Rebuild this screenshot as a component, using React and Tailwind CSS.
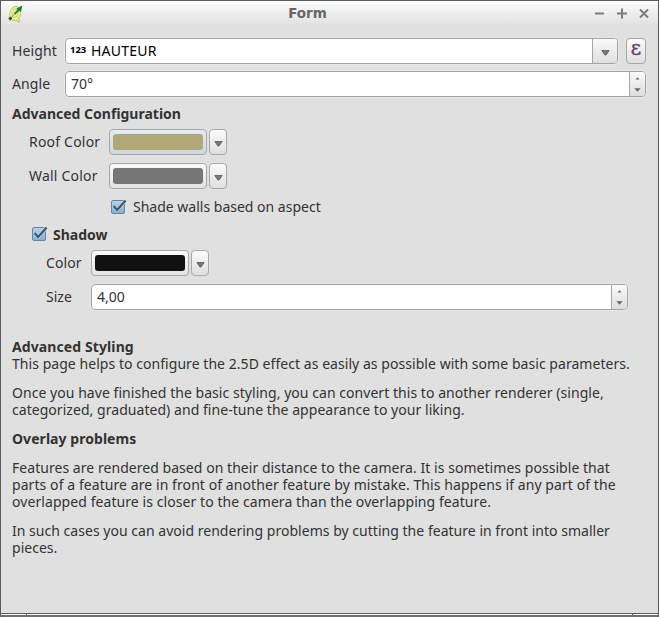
import React from 'react';

function Arrow() {
  return (
    <svg width="9" height="6" viewBox="0 0 9 6" className="mt-[3px]">
      <path d="M0.8 0.5h7.4L5.1 5H3.9z" fill="#777" stroke="#5c5c5c" strokeWidth="0.8" />
    </svg>
  );
}

function Spinner() {
  return (
    <div className="flex h-full w-4 flex-col items-center justify-between rounded-r-[3px] border-l border-[#a6a6a6] bg-linear-to-b from-[#fafafa] to-[#dedede] pt-[5px] pb-1">
      <svg width="5" height="3" viewBox="0 0 5 3"><path d="M0.5 2.5L2.5 0.3 4.5 2.5z" fill="#666" /></svg>
      <svg width="7" height="4" viewBox="0 0 7 4"><path d="M0.3 0.3h6.4L3.5 3.7z" fill="#666" /></svg>
    </div>
  );
}

function SpinBox({ value, className }) {
  return (
    <div className={`flex h-[26px] items-center rounded-[4px] border border-[#a4a4a4] bg-white shadow-[0_0_0_1px_#e8e8e8] ${className}`}>
      <span className="flex-1 pb-[2px] pl-[5px]">{value}</span>
      <Spinner />
    </div>
  );
}

function ColorButton({ color, frame = 'from-[#fafafa] to-[#e2e2e2]' }) {
  return (
    <div className="flex gap-[2px]">
      <div className={`h-[26px] w-[98px] rounded-[4px] border border-[#a8a8a8] bg-linear-to-b px-[3px] py-1 ${frame}`}>
        <div className={`h-4 rounded-[3px] ${color}`} />
      </div>
      <div className="flex h-[26px] w-[18px] items-center justify-center rounded-[4px] border border-[#a8a8a8] bg-linear-to-b from-[#fbfbfb] to-[#dfdfdf]">
        <Arrow />
      </div>
    </div>
  );
}

function Check() {
  return (
    <svg width="17" height="16" viewBox="0 0 17 16">
      <defs>
        <linearGradient id="box" x1="0" y1="0" x2="0" y2="1">
          <stop offset="0" stopColor="#b7d3ec" />
          <stop offset="1" stopColor="#86add0" />
        </linearGradient>
      </defs>
      <rect x="1.5" y="1.5" width="13" height="13" rx="1.5" fill="url(#box)" stroke="#6285a3" />
      <path d="M3.7 6.9L7.1 10.9 15.6 1.5" fill="none" stroke="#c6ddf0" strokeWidth="3.4" />
      <path d="M3.7 6.9L7.1 10.9 15.6 1.5" fill="none" stroke="#465767" strokeWidth="2.3" />
    </svg>
  );
}

function Logo() {
  return (
    <svg width="16" height="18" viewBox="0 0 16 18">
      <ellipse cx="7.2" cy="8.5" rx="4" ry="5.8" transform="rotate(18 7.2 8.5)" fill="#f8fac8" stroke="#b4b96a" strokeWidth="3.6" />
      <path d="M7 12.5c2-.5 2 4 5 3" fill="none" stroke="#a9ae60" strokeWidth="3" />
      <ellipse cx="7.2" cy="8.5" rx="4" ry="5.8" transform="rotate(18 7.2 8.5)" fill="none" stroke="#e9ef78" strokeWidth="2.4" />
      <path d="M7 12.5c2-.5 2 4 5 3" fill="none" stroke="#edf28a" strokeWidth="1.8" />
      <path d="M6.5 9L11.5 4" fill="none" stroke="#277a36" strokeWidth="2" />
      <path d="M2.5 13.5L6.5 9" fill="none" stroke="#7b8a42" strokeWidth="0.8" />
      <path d="M8.5 3.5L14.3 0.5 13 7z" fill="#1c7d35" />
      <path d="M0.6 13.5h3.4M2.3 11.8v3.4" stroke="#2d4a26" strokeWidth="1.5" />
    </svg>
  );
}

export default function App() {
  return (
    <div className="flex h-[617px] w-[659px] flex-col border-x border-t border-[#5c5a5c] bg-[#e0e0e0] font-['Noto_Sans',sans-serif] text-[14px] leading-[17px] whitespace-nowrap text-[#333]">
      <header className="flex h-[25px] items-center bg-linear-to-b from-[#fcfcfc] to-[#e0e0e0] pr-[7px] pl-[7px]">
        <Logo />
        <h1 className="flex-1 pr-[2px] text-center font-['DejaVu_Sans',sans-serif] text-[13.5px] font-bold text-[#666]">Form</h1>
        <svg width="58" height="12" viewBox="0 0 58 12" fill="none" stroke="#7b7b7b" strokeWidth="2">
          <path d="M2 5.5h9M24 5.5h10M29 0.5v10M47 1.5l8 8M55 1.5l-8 8" />
        </svg>
      </header>
      <main className="flex flex-1 flex-col pl-[11px]">
        <div className="mt-3 flex h-[26px] items-center">
          <label className="w-[53px] pb-[2px] tracking-[0.1px]">Height</label>
          <div className="flex h-[26px] w-[553px] items-center rounded-[4px] border border-[#a4a4a4] bg-white shadow-[0_0_0_1px_#e8e8e8]">
            <span className="w-[25px] pb-[3px] pl-1 text-[9.5px] font-bold text-black">123</span>
            <span className="flex-1 pb-[2px] tracking-[0.25px] text-black">HAUTEUR</span>
            <div className="flex h-full w-[25px] items-center justify-center rounded-r-[3px] border-l border-[#a6a6a6] bg-linear-to-b from-[#fafafa] to-[#dedede]">
              <Arrow />
            </div>
          </div>
          <div className="ml-2 flex h-[26px] w-5 items-center justify-center rounded-[4px] border border-[#a8a8a8] bg-linear-to-b from-[#fbfbfb] to-[#dfdfdf] pb-[6px] font-['DejaVu_Serif',serif] text-[20px] [-webkit-text-stroke:0.4px_#63406b] text-[#63406b]">ε</div>
        </div>
        <div className="mt-[7px] flex h-[26px] items-center">
          <label className="w-[53px] pb-[2px] tracking-[0.1px]">Angle</label>
          <SpinBox value="70°" className="w-[581px]" />
        </div>
        <h2 className="mt-2 h-[17px] font-bold">Advanced Configuration</h2>
        <div className="mt-[7px] flex h-[26px] items-center pl-[17px]">
          <label className="w-20 pb-[2px] tracking-[0.2px]">Roof Color</label>
          <ColorButton color="bg-[#b0a877]" frame="from-[#e5ebf1] to-[#ced7df]" />
        </div>
        <div className="mt-2 flex h-[26px] items-center pl-[17px]">
          <label className="w-20 pb-[2px] tracking-[0.2px]">Wall Color</label>
          <ColorButton color="bg-[#777]" />
        </div>
        <div className="mt-[9px] flex h-[17px] items-center gap-[6px] pl-[98px]">
          <Check />
          <span>Shade walls based on aspect</span>
        </div>
        <div className="mt-[11px] flex h-[17px] items-center gap-[5px] pl-[19px]">
          <div className="pb-[2px]"><Check /></div>
          <b>Shadow</b>
        </div>
        <div className="mt-[7px] flex h-[26px] items-center pl-[34px]">
          <label className="w-[45px] pb-[2px] tracking-[0.1px]">Color</label>
          <ColorButton color="bg-[#111]" />
        </div>
        <div className="mt-2 flex h-[26px] items-center pl-[34px]">
          <label className="w-[45px] pb-[2px]">Size</label>
          <SpinBox value="4,00" className="w-[537px]" />
        </div>
        <article className="mt-[28px]">
          <h2 className="font-bold tracking-[0.1px]">Advanced Styling</h2>
          <p className="tracking-[0.05px]">This page helps to configure the 2.5D effect as easily as possible with some basic parameters.</p>
          <p className="mt-3 tracking-[0.045px]">Once you have finished the basic styling, you can convert this to another renderer (single,<br />categorized, graduated) and fine-tune the appearance to your liking.</p>
          <h2 className="mt-3 font-bold tracking-[0.05px]">Overlay problems</h2>
          <p className="mt-3 tracking-[0.075px]"><span className="tracking-[0.045px]">Features are rendered based on their distance to the camera. It is sometimes possible that</span><br />parts of a feature are in front of another feature by mistake. This happens if any part of the<br />overlapped feature is closer to the camera than the overlapping feature.</p>
          <p className="mt-3 tracking-[0.025px]">In such cases you can avoid rendering problems by cutting the feature in front into smaller<br />pieces.</p>
        </article>
      </main>
      <footer className="flex h-1 border-t border-b-2 border-t-[#5c5a5c] border-b-[#716f71] bg-white">
        <div className="w-[26px] border-r border-[#5c5a5c]" />
        <div className="flex-1" />
        <div className="w-[26px] border-l border-[#5c5a5c]" />
      </footer>
    </div>
  );
}
